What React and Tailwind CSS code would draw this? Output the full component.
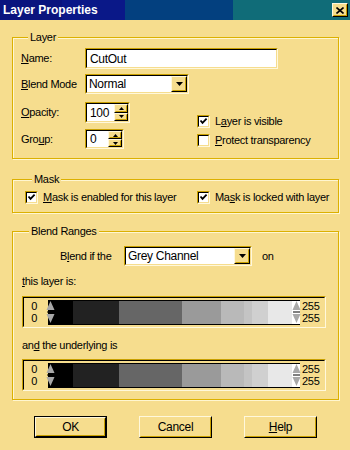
import React from 'react';

// Win95-style "Layer Properties" dialog in a yellow scheme

const bands = [
  ['#000000', 25],
  ['#222222', 46],
  ['#666666', 63],
  ['#9a9a9a', 39],
  ['#b9b9b9', 23],
  ['#c4c4c4', 8],
  ['#d0d0d0', 16],
  ['#e8e8e8', 24],
  ['#ffffff', 8],
];

function Sunken({ className = '', inner = 'bg-white', children }) {
  return (
    <div className={`border border-t-[#c9a000] border-l-[#c9a000] border-b-[#fff8dc] border-r-[#fff8dc] ${className}`}>
      <div className={`h-full w-full border border-t-black border-l-black border-b-[#f6dd8e] border-r-[#f6dd8e] flex items-center ${inner}`}>
        {children}
      </div>
    </div>
  );
}

function Raised({ className = '', children }) {
  return (
    <div className={`border border-t-[#fff8dc] border-l-[#fff8dc] border-b-black border-r-black bg-[#f6dd8e] ${className}`}>
      <div className="h-full w-full border border-t-transparent border-l-transparent border-b-[#c9a000] border-r-[#c9a000] flex items-center justify-center">
        {children}
      </div>
    </div>
  );
}

function Arrow({ up }) {
  return (
    <svg width="5" height="3" viewBox="0 0 5 3">
      <polygon points={up ? '2.5,0 5,3 0,3' : '0,0 5,0 2.5,3'} fill="#000" />
    </svg>
  );
}

function Dropdown({ value, className }) {
  return (
    <Sunken className={className}>
      <span className="flex-1 pl-[2px]">{value}</span>
      <Raised className="w-[16px] h-full">
        <svg width="7" height="4" viewBox="0 0 7 4">
          <polygon points="0,0 7,0 3.5,4" fill="#000" />
        </svg>
      </Raised>
    </Sunken>
  );
}

function Spinner({ value, className }) {
  return (
    <Sunken className={className}>
      <span className="flex-1 pl-[3px] text-[12px]">{value}</span>
      <div className="flex flex-col h-full w-[14px]">
        <Raised className="flex-1">
          <Arrow up />
        </Raised>
        <Raised className="flex-1">
          <Arrow />
        </Raised>
      </div>
    </Sunken>
  );
}

function Check({ checked, children }) {
  return (
    <div className="flex items-center gap-[5px] h-[13px]">
      <Sunken className="w-[13px] h-[13px]">
        {checked && (
          <svg width="9" height="9" viewBox="0 0 9 9">
            <polyline points="1.5,3.5 3.5,5.8 7.6,1.6" fill="none" stroke="#000" strokeWidth="1.8" />
          </svg>
        )}
      </Sunken>
      <span className="leading-[13px]">{children}</span>
    </div>
  );
}

function Group({ title, className = '', children }) {
  return (
    <fieldset className={`border border-[#dcb000] shadow-[inset_1px_1px_0_#fff6d0,1px_1px_0_#fff6d0] ${className}`}>
      <legend className="ml-[7px] px-[2px] leading-[13px] bg-[#f6dd8e]">{title}</legend>
      {children}
    </fieldset>
  );
}

function Handle() {
  return (
    <svg width="9" height="24" viewBox="0 0 9 24">
      <polygon points="4.5,1 8.5,10 0.5,10" fill="#a8a8a8" />
      <line x1="1" y1="12" x2="8" y2="12" stroke="#000" strokeWidth="1" />
      <polygon points="0.5,14 8.5,14 4.5,23" fill="#a8a8a8" />
    </svg>
  );
}

function RangeBar({ className = '' }) {
  return (
    <Sunken className={`w-[304px] h-[32px] ${className}`} inner="bg-[#f6dd8e]">
      <div className="w-[13px] text-right leading-[12px] text-[11px]">
        <div>0</div>
        <div>0</div>
      </div>
      <div className="relative ml-[11px] w-[252px] h-[25px] border-y border-black flex">
        {bands.map(([c, w], i) => (
          <div key={i} className="h-full" style={{ background: c, width: w }} />
        ))}
        <div className="absolute left-[-2px] top-[-1px]">
          <Handle />
        </div>
        <div className="absolute right-[-1px] top-[-1px]">
          <Handle />
        </div>
      </div>
      <div className="pl-[2px] leading-[12px] text-[11px]">
        <div>255</div>
        <div>255</div>
      </div>
    </Sunken>
  );
}

function Button({ children, isDefault }) {
  const btn = <Raised className="w-full h-full text-[12px]">{children}</Raised>;
  return (
    <div className={`w-[73px] h-[22px] ${isDefault ? 'border border-black' : ''}`}>{btn}</div>
  );
}

export default function App() {
  return (
    <div className="w-[350px] h-[450px] bg-[#f6dd8e] text-black text-[11px] tracking-[-0.3px] font-['Liberation_Sans',Arial,sans-serif] overflow-hidden">
      {/* Title bar */}
      <div className="h-[20px] flex items-center justify-between bg-[linear-gradient(90deg,#0a147e_0px,#0a147e_62px,#0a1888_62px,#0a1888_125px,#03407f_125px,#03407f_233px,#106c78_233px)]">
        <span className="pl-[3px] text-white font-bold text-[12px] tracking-normal">Layer Properties</span>
        <Raised className="w-[16px] h-[14px] mr-[2px]">
          <svg width="8" height="7" viewBox="0 0 8 7">
            <path d="M0.5 0.5 L7.5 6.5 M7.5 0.5 L0.5 6.5" stroke="#000" strokeWidth="1.6" />
          </svg>
        </Raised>
      </div>

      <div className="pl-[12px] pr-[11px] pt-[11px]">
        {/* Layer */}
        <Group title="Layer" className="px-[8px] pt-[4px] pb-[9px]">
          <div className="flex items-center h-[21px]">
            <span className="w-[64px]"><u>N</u>ame:</span>
            <Sunken className="w-[193px] h-[21px]">
              <span className="pl-[3px] text-[12px]">CutOut</span>
            </Sunken>
          </div>
          <div className="flex items-center h-[20px] mt-[5px]">
            <span className="w-[64px]"><u>B</u>lend Mode</span>
            <Dropdown value="Normal" className="w-[104px] h-[20px] text-[12px]" />
          </div>
          <div className="flex">
            <div className="w-[176px]">
              <div className="flex items-center h-[21px] mt-[8px]">
                <span className="w-[64px]"><u>O</u>pacity:</span>
                <Spinner value="100" className="w-[45px] h-[21px]" />
              </div>
              <div className="flex items-center h-[20px] mt-[6px]">
                <span className="w-[64px]">Gro<u>u</u>p:</span>
                <Spinner value="0" className="w-[39px] h-[20px]" />
              </div>
            </div>
            <div className="flex flex-col gap-[6px] mt-[21px]">
              <Check checked>L<u>a</u>yer is visible</Check>
              <Check><u>P</u>rotect transparency</Check>
            </div>
          </div>
        </Group>

        {/* Mask */}
        <Group title="Mask" className="mt-[14px] pl-[12px] pt-[5px] pb-[8px]">
          <div className="flex">
            <div className="w-[172px]">
              <Check checked><u>M</u>ask is enabled for this layer</Check>
            </div>
            <Check checked>Ma<u>s</u>k is locked with layer</Check>
          </div>
        </Group>

        {/* Blend Ranges */}
        <Group title="Blend Ranges" className="mt-[12px] px-[9px] pt-[8px] pb-[8px]">
          <div className="flex items-center h-[20px]">
            <span className="ml-[38px] w-[64px]">B<u>l</u>end if the</span>
            <Dropdown value="Grey Channel" className="w-[128px] h-[20px] text-[12px]" />
            <span className="ml-[10px]">on</span>
          </div>
          <div className="mt-[9px] leading-[13px]"><u>t</u>his layer is:</div>
          <RangeBar className="mt-[8px]" />
          <div className="mt-[11px] leading-[13px]">an<u>d</u> the underlying is</div>
          <RangeBar className="mt-[7px]" />
        </Group>

        {/* Buttons */}
        <div className="flex gap-[32px] ml-[22px] mt-[16px]">
          <Button isDefault>OK</Button>
          <Button>Cancel</Button>
          <Button><u>H</u>elp</Button>
        </div>
      </div>
    </div>
  );
}
